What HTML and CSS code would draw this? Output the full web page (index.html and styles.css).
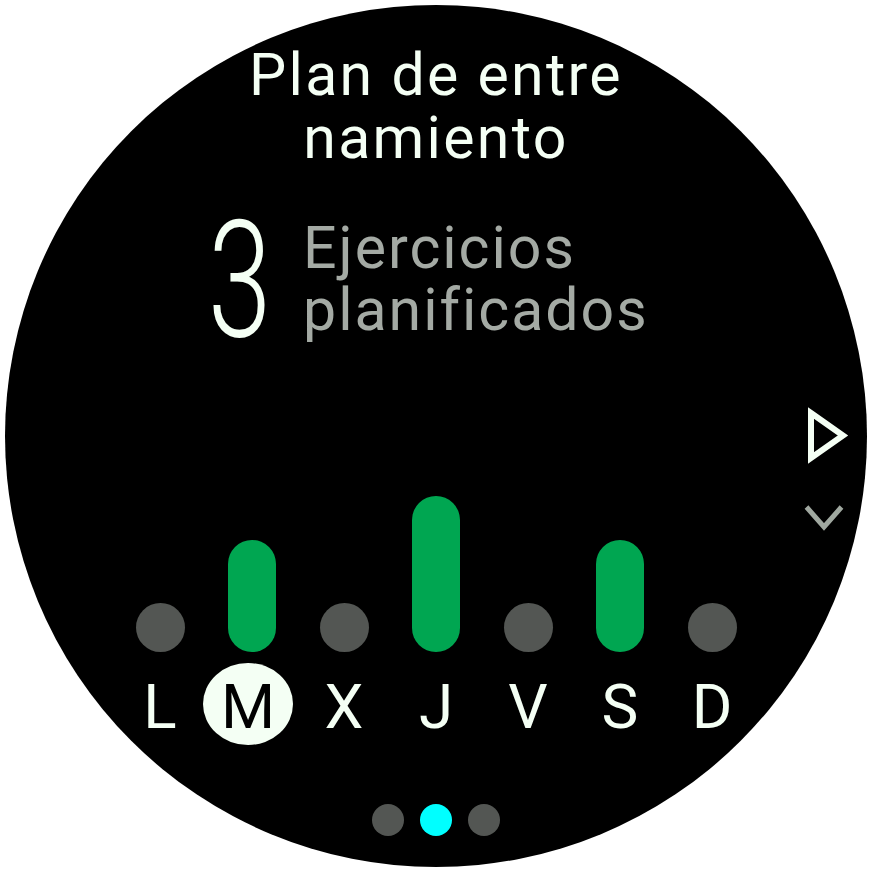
FILE: index.html
```html
<!DOCTYPE html>
<html lang="es">
<head>
  <meta charset="UTF-8">
  <meta name="viewport" content="width=device-width, initial-scale=1.0">
  <title>Plan de entrenamiento</title>
  <link rel="stylesheet" href="styles.css">
</head>
<body>
  <div class="watch">
    <h1 class="title">Plan de entre<br>namiento</h1>

    <div class="stat">
      <span class="count">3</span>
      <span class="label">
        <span class="line">Ejercicios</span>
        <span class="line">planificados</span>
      </span>
    </div>

    <div class="chart">
      <div class="col"><span class="dot"></span></div>
      <div class="col"><span class="bar" style="height: 112px"></span></div>
      <div class="col"><span class="dot"></span></div>
      <div class="col"><span class="bar" style="height: 156px"></span></div>
      <div class="col"><span class="dot"></span></div>
      <div class="col"><span class="bar" style="height: 112px"></span></div>
      <div class="col"><span class="dot"></span></div>
    </div>

    <div class="days">
      <div class="col"><span class="day">L</span></div>
      <div class="col"><span class="day today">M</span></div>
      <div class="col"><span class="day">X</span></div>
      <div class="col"><span class="day">J</span></div>
      <div class="col"><span class="day">V</span></div>
      <div class="col"><span class="day">S</span></div>
      <div class="col"><span class="day">D</span></div>
    </div>

    <div class="pager">
      <span class="page"></span>
      <span class="page active"></span>
      <span class="page"></span>
    </div>

    <!-- side button hints -->
    <svg class="hints" width="60" height="130" viewBox="0 0 60 130">
      <polygon points="11,8 43,30.5 11,53" fill="none" stroke="#f4fff4" stroke-width="6" stroke-linejoin="miter"/>
      <polyline points="6.5,102 24,122 41.5,102" fill="none" stroke="#a0a8a0" stroke-width="5"/>
    </svg>
  </div>
</body>
</html>
```

FILE: styles.css
```css
body {
  margin: 0;
  background-color: #fff;
  font-family: Roboto, "Liberation Sans", sans-serif;
}
.watch {
  position: relative;
  width: 862px;
  height: 862px;
  margin: 5px 0 0 5px;
  padding-top: 38px;
  box-sizing: border-box;
  border-radius: 50%;
  background-color: #000;
  display: flex;
  flex-direction: column;
  align-items: center;
  color: #f4fff4;
}
.title {
  margin: 0;
  font-size: 59px;
  font-weight: 400;
  line-height: 63px;
  letter-spacing: 2.3px;
  text-align: center;
}
.stat {
  align-self: stretch;
  display: flex;
  align-items: flex-start;
  margin-top: 48px;
  padding-left: 203px;
}
.count {
  width: 60px;
  margin-top: 4px;
  margin-right: 35px;
  font-size: 163px;
  font-weight: 300;
  line-height: 120px;
  transform: scaleX(0.7);
  transform-origin: left;
}
.label {
  display: flex;
  flex-direction: column;
  color: #a4aaa4;
  font-size: 59px;
  font-weight: 400;
  line-height: 62px;
  letter-spacing: 2px;
}
.line {
  height: 62px;
}
.chart {
  display: flex;
  align-items: flex-end;
  height: 156px;
  margin-top: 155px;
}
.col {
  width: 92px;
  display: flex;
  justify-content: center;
  align-items: flex-end;
}
.dot {
  width: 49px;
  height: 49px;
  border-radius: 50%;
  background-color: #535653;
}
.bar {
  width: 48px;
  border-radius: 24px;
  background-color: #00a651;
}
.days {
  display: flex;
  margin-top: 11px;
}
.day {
  flex-shrink: 0;
  width: 90px;
  height: 82px;
  padding-top: 6px;
  box-sizing: border-box;
  font-size: 62px;
  font-weight: 400;
  line-height: 76px;
  text-align: center;
}
.today {
  border-radius: 50%;
  background-color: #f4fff4;
  color: #000;
  margin-right: 8px;
}
.pager {
  display: flex;
  gap: 16px;
  margin-top: 59px;
}
.page {
  width: 32px;
  height: 32px;
  border-radius: 50%;
  background-color: #535653;
}
.page.active {
  background-color: #00ffff;
}
.hints {
  position: absolute;
  left: 795px;
  top: 400px;
}
```
